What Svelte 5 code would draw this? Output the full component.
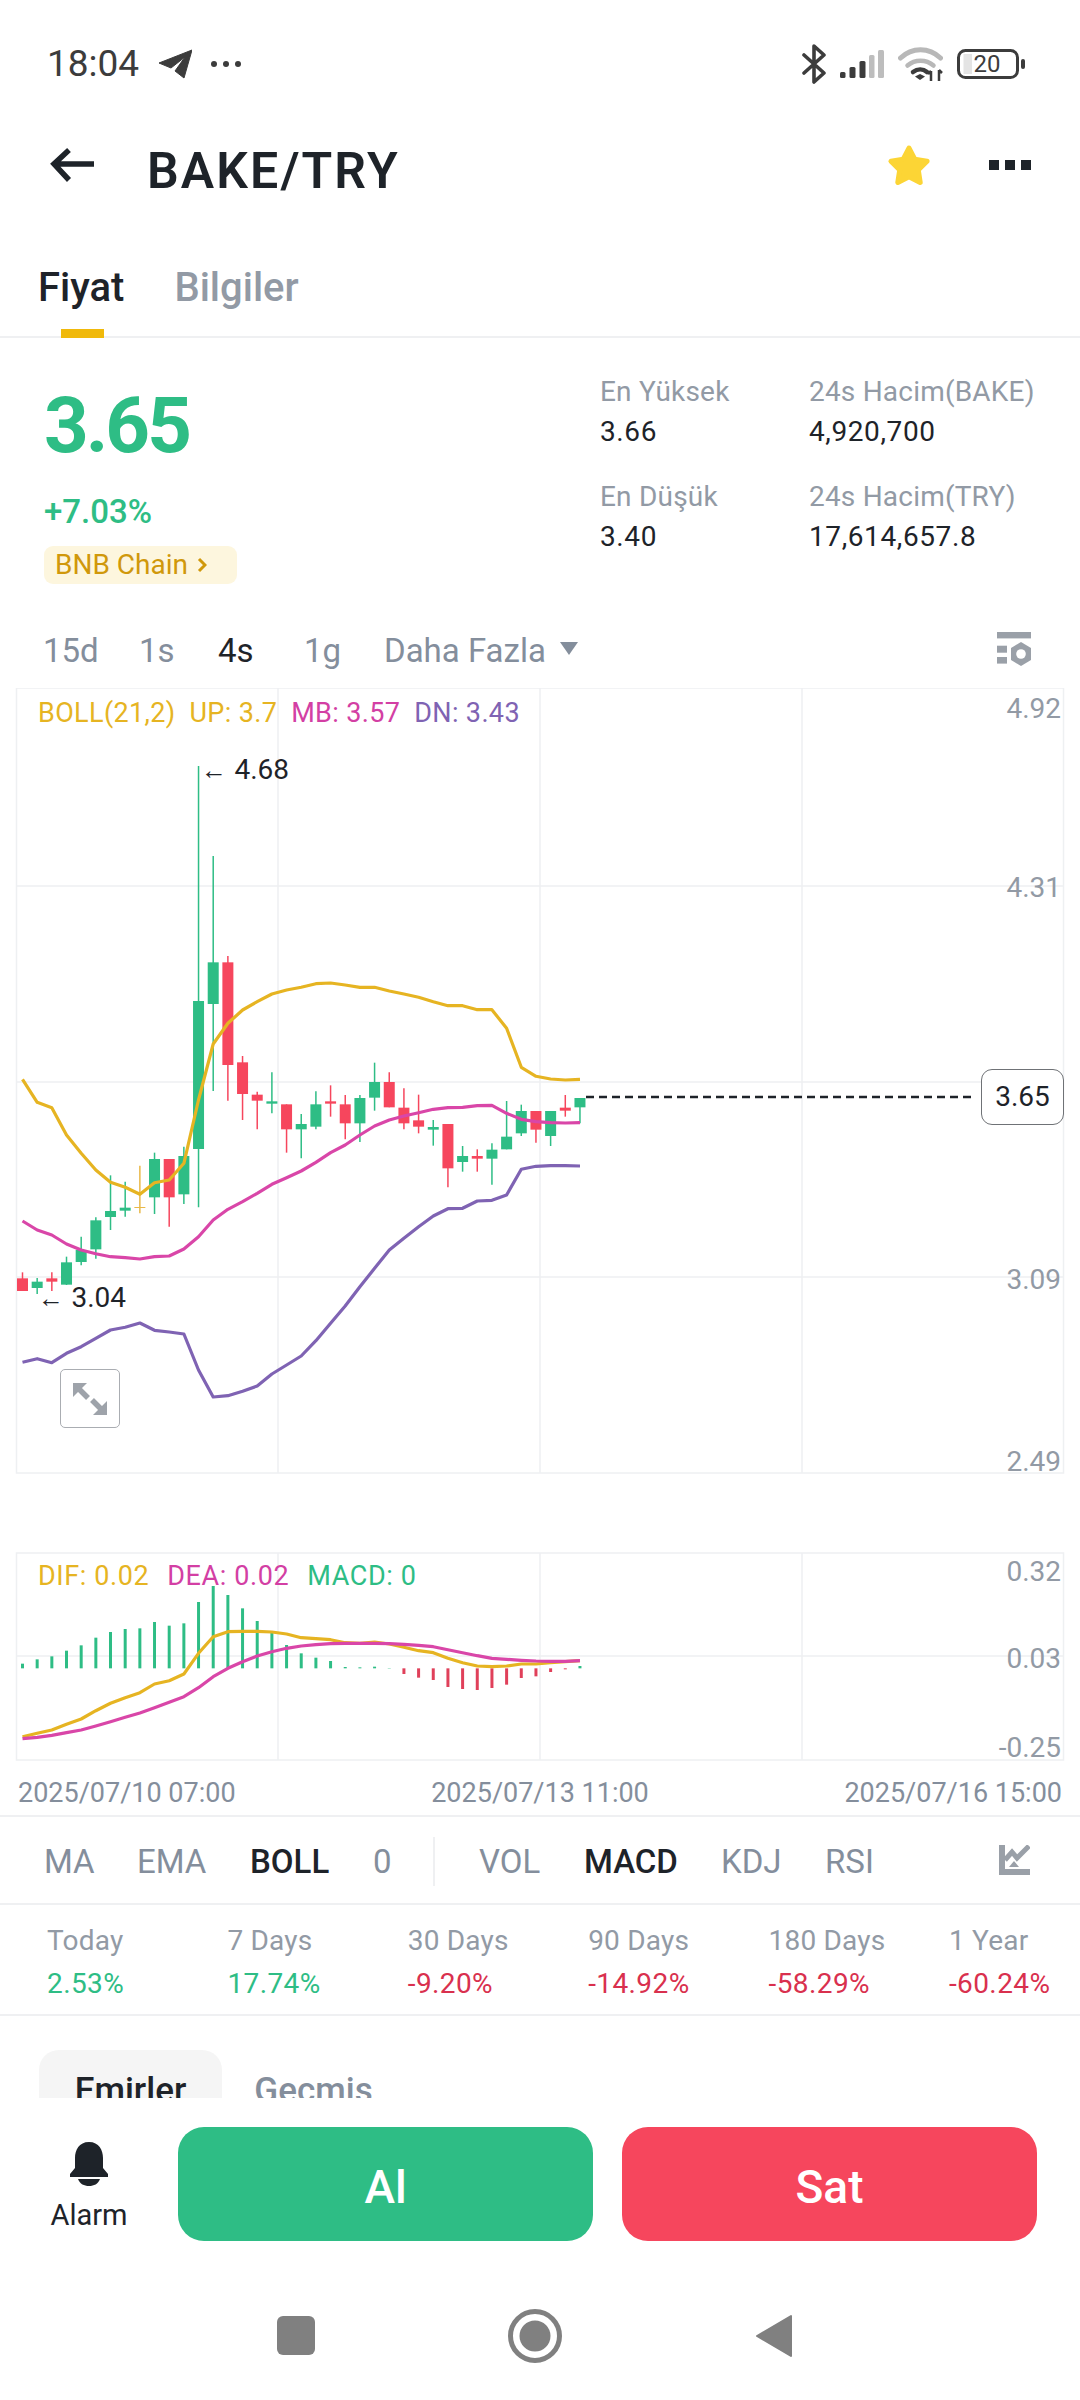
<script>
  const GREEN = '#2ebd85';
  const RED = '#f6465d';

  // chart geometry, candle index -> x, and vertical values scaled by 3 from y=1030
  const cx = (i) => 22.5 + i * 14.67;
  const py = (v) => 1030 + v / 3;
  // [up, wickTop, wickBottom, bodyTop, bodyBottom]
  const candles = [
    [0, 727, 783, 745, 783], [1, 744, 792, 755, 774], [0, 727, 783, 745, 755], [1, 680, 765, 697, 764],
    [1, 620, 706, 660, 696], [1, 562, 686, 571, 658], [1, 436, 600, 543, 561], [1, 455, 560, 533, 542],
    [2, 407, 550, 531, 534], [1, 368, 552, 387, 502], [0, 387, 590, 387, 502], [1, 350, 522, 378, 493],
    [1, -792, 532, -87, 357], [1, -522, 183, -203, -78], [0, -222, 212, -203, 105], [0, 78, 270, 97, 192],
    [0, 185, 298, 194, 212], [1, 127, 250, 214, 221], [0, 223, 368, 223, 298], [1, 252, 385, 282, 298],
    [1, 184, 298, 223, 290], [0, 166, 260, 214, 221], [0, 195, 328, 223, 280], [1, 195, 336, 204, 280],
    [1, 98, 242, 156, 203], [0, 127, 232, 156, 232], [0, 175, 298, 233, 280], [0, 194, 310, 271, 290],
    [1, 270, 347, 291, 299], [0, 282, 472, 282, 415], [1, 348, 425, 378, 396], [0, 358, 425, 378, 386],
    [1, 340, 464, 359, 386], [1, 213, 358, 320, 358], [1, 224, 318, 243, 310], [0, 243, 338, 243, 299],
    [1, 243, 348, 243, 318], [0, 195, 260, 233, 242], [1, 204, 280, 204, 232]
  ];
  const upper = [148, 217, 233, 315, 370, 420, 457, 472, 493, 458, 450, 400, 210, 42, -20, -60, -85, -108, -120, -128, -139, -141, -135, -128, -128, -117, -108, -98, -85, -73, -73, -61, -61, -5, 112, 139, 147, 150, 148];
  const middle = [573, 600, 615, 642, 660, 671, 680, 683, 687, 680, 678, 657, 620, 570, 538, 515, 490, 463, 443, 423, 397, 368, 345, 315, 288, 270, 258, 248, 238, 233, 232, 227, 226, 250, 268, 275, 278, 279, 278];
  const lower = [997, 986, 998, 970, 950, 925, 900, 892, 879, 901, 906, 912, 1020, 1101, 1097, 1084, 1068, 1032, 1005, 978, 932, 880, 828, 770, 715, 660, 625, 590, 558, 536, 535, 513, 511, 495, 418, 409, 407, 407, 408];

  const my = (v) => 1540 + v / 3;
  const bars = [371, 358, 349, 332, 316, 293, 276, 267, 265, 246, 257, 250, 186, 138, 165, 205, 243, 275, 315, 340, 353, 363, 381, 382, 380, 384, 402, 413, 420, 441, 447, 450, 444, 434, 414, 409, 396, 388, 378];
  const dif = [590, 580, 570, 553, 537, 512, 490, 473, 458, 432, 422, 402, 340, 290, 275, 274, 274, 276, 282, 293, 296, 299, 308, 310, 306, 312, 322, 332, 338, 355, 368, 378, 380, 378, 372, 372, 368, 365, 362];
  const dea = [596, 592, 586, 578, 570, 558, 545, 532, 519, 503, 487, 470, 443, 410, 385, 365, 348, 335, 325, 318, 314, 311, 310, 310, 310, 311, 313, 316, 320, 329, 338, 347, 355, 358, 361, 363, 364, 364, 362];

  const line = (vals, f) => vals.map((v, i) => `${cx(i).toFixed(1)},${f(v).toFixed(1)}`).join(' ');

  const intervals = [
    { label: '15d' }, { label: '1s' }, { label: '4s', active: true }, { label: '1g' }
  ];
  const periods = [
    { label: 'Today', value: '2.53%', up: true },
    { label: '7 Days', value: '17.74%', up: true },
    { label: '30 Days', value: '-9.20%' },
    { label: '90 Days', value: '-14.92%' },
    { label: '180 Days', value: '-58.29%' },
    { label: '1 Year', value: '-60.24%' }
  ];
</script>

<div class="screen">
  <div class="content">
    <div class="status">
      <div class="status-left">
        <span class="time">18:04</span>
        <svg width="34" height="30" viewBox="0 0 34 30"><path d="M34 1 1 14l12 5L27 8 17 22l9 7z" fill="#3c3c3c" stroke="#3c3c3c" stroke-width="1" stroke-linejoin="round" /></svg>
        <svg class="more" width="30" height="6" viewBox="0 0 30 6"><circle cx="3" cy="3" r="3" /><circle cx="15" cy="3" r="3" /><circle cx="27" cy="3" r="3" /></svg>
      </div>
      <div class="status-right">
        <svg width="24" height="40" viewBox="0 0 24 40"><path d="M2 11l20 18-10 9V2l10 9L2 29" fill="none" stroke="#3c3c3c" stroke-width="3.6" stroke-linejoin="round" stroke-linecap="round" /></svg>
        <svg width="44" height="28" viewBox="0 0 44 28">
          <rect x="0" y="22" width="5.5" height="6" rx="1.5" fill="#3c3c3c" />
          <rect x="9.5" y="17" width="6" height="11" rx="1.5" fill="#3c3c3c" />
          <rect x="19.5" y="11" width="6" height="17" rx="1.5" fill="#3c3c3c" />
          <rect x="29" y="5" width="5.5" height="23" rx="1.5" fill="#bdbdbd" />
          <rect x="38" y="0" width="6" height="28" rx="1.5" fill="#bdbdbd" />
        </svg>
        <svg width="45" height="36" viewBox="0 0 45 36">
          <path d="M2.5 12C14 1 31 1 42.5 12" fill="none" stroke="#b8b8b8" stroke-width="5" stroke-linecap="round" />
          <path d="M9.5 19.5C17 13 28 13 35.5 19.5" fill="none" stroke="#b8b8b8" stroke-width="4.5" stroke-linecap="round" />
          <path d="M15 26c4.500-3.500 10-3.500 14 0" fill="none" stroke="#3c3c3c" stroke-width="4.500" stroke-linecap="round" />
          <path d="M22 34l-5-3.500 5-2.500 5 2.500z" fill="#3c3c3c" />
          <path d="M33 25v10M30 28l3-3M41 24v11M41 24l3 3" stroke="#3c3c3c" stroke-width="2.500" fill="none" />
        </svg>
        <svg width="68" height="30" viewBox="0 0 68 30">
          <rect x="1.500" y="1.500" width="59" height="27" rx="7" fill="#fff" stroke="#3c3c3c" stroke-width="3" />
          <rect x="6.500" y="5" width="8.500" height="20" fill="#e4e4e4" />
          <rect x="64" y="10" width="4" height="10" rx="2" fill="#3c3c3c" />
          <text x="30" y="23" text-anchor="middle" class="batt">20</text>
        </svg>
      </div>
    </div>

    <div class="header">
      <svg width="45" height="36" viewBox="0 0 45 36"><path d="M44 17H5M19 3 4 17l15 16" fill="none" stroke="#1e2329" stroke-width="5.500" /></svg>
      <h1>BAKE/TRY</h1>
      <svg class="star" width="44" height="44" viewBox="0 0 43 43"><polygon points="21.500,5 27.100,15.800 39.100,17.800 30.500,26.400 32.400,38.500 21.500,33 10.600,38.500 12.500,26.400 3.900,17.800 15.900,15.800" fill="#fcd535" stroke="#fcd535" stroke-width="5" stroke-linejoin="round" /></svg>
      <div class="dots"><i></i><i></i><i></i></div>
    </div>

    <div class="tabs">
      <div class="tab active">Fiyat<span class="ink"></span></div>
      <div class="tab">Bilgiler</div>
    </div>

    <div class="summary">
      <div class="price-col">
        <div class="price">3.65</div>
        <div class="change">+7.03%</div>
        <div class="badge">BNB Chain
          <svg width="10" height="16" viewBox="0 0 10 16"><path d="M2 2l6 6-6 6" fill="none" stroke="#d0980b" stroke-width="3" /></svg>
        </div>
      </div>
      <div class="stats">
        <div><span class="k">En Yüksek</span><span class="v">3.66</span></div>
        <div><span class="k">24s Hacim(BAKE)</span><span class="v">4,920,700</span></div>
        <div><span class="k">En Düşük</span><span class="v">3.40</span></div>
        <div><span class="k">24s Hacim(TRY)</span><span class="v">17,614,657.8</span></div>
      </div>
    </div>

    <div class="intervals">
      {#each intervals as it}
        <span class:on={it.active}>{it.label}</span>
      {/each}
      <span class="more-int">Daha Fazla
        <svg width="20" height="14" viewBox="0 0 20 14"><path d="M1 1h18l-9 13z" fill="#848e9c" /></svg>
      </span>
      <svg class="settings" width="34" height="34" viewBox="0 0 34 34">
        <rect width="34" height="6.400" />
        <rect y="13.700" width="10" height="7" />
        <rect y="25" width="10" height="6.600" />
        <path d="M24 10l10 6v12l-10 6-10-6V16z" />
        <circle cx="24" cy="22" r="4.800" fill="#fff" />
      </svg>
    </div>

    <div class="chart">
      <svg class="plot" width="1080" height="1127" viewBox="0 688 1080 1127">
        <g stroke="#eef0f2" stroke-width="1.500" fill="none">
          <rect x="16.500" y="688" width="1047" height="785" />
          <path d="M16.500 886H1063M16.500 1082H1063M16.500 1277H1063M278 688V1473M540 688V1473M802 688V1473" />
          <rect x="16.500" y="1553" width="1047" height="207" />
          <path d="M16.500 1656H1063M278 1553V1760M540 1553V1760M802 1553V1760" />
        </g>

        {#each candles as c, i}
          {@const col = c[0] === 1 ? GREEN : c[0] === 0 ? RED : '#e9b949'}
          <line x1={cx(i)} x2={cx(i)} y1={py(c[1])} y2={py(c[2])} stroke={col} stroke-width="1.500" />
          <rect x={cx(i) - 5.500} y={py(c[3])} width="11" height={py(c[4]) - py(c[3])} fill={col} />
        {/each}
        <polyline points={line(upper, py)} class="ln" stroke="#e6b422" />
        <polyline points={line(middle, py)} class="ln" stroke="#d946a8" />
        <polyline points={line(lower, py)} class="ln" stroke="#7f63b3" />
        <path d="M586 1097H976" stroke="#1e2329" stroke-width="2.500" stroke-dasharray="8 5" />

        {#each bars as b, i}
          <line x1={cx(i)} x2={cx(i)} y1={my(b)} y2={my(385)} stroke={i > 25 && i < 38 ? '#e0405a' : GREEN} stroke-width="3" />
        {/each}
        <polyline points={line(dif, my)} class="ln" stroke="#e6b422" />
        <polyline points={line(dea, my)} class="ln" stroke="#d946a8" />
      </svg>

      <div class="legend boll">
        <span class="gold">BOLL(21,2)</span><span class="gold">UP: 3.7</span><span class="pink">MB: 3.57</span><span class="violet">DN: 3.43</span>
      </div>
      <div class="legend macd">
        <span class="gold">DIF: 0.02</span><span class="pink">DEA: 0.02</span><span class="teal">MACD: 0</span>
      </div>

      <div class="mark high">← <b>4.68</b></div>
      <div class="mark low">← <b>3.04</b></div>

      <div class="axis" style="top: 3px">4.92</div>
      <div class="axis" style="top: 182px">4.31</div>
      <div class="axis" style="top: 574px">3.09</div>
      <div class="axis" style="top: 756px">2.49</div>
      <div class="axis" style="top: 866px">0.32</div>
      <div class="axis" style="top: 953px">0.03</div>
      <div class="axis" style="top: 1042px">-0.25</div>
      <div class="last">3.65</div>

      <button class="expand" aria-label="expand">
        <svg width="34" height="32" viewBox="0 0 34 32" fill="#9ea3aa">
          <path d="M0 0h14L0 14z" />
          <path d="M5 5l10 10" stroke="#9ea3aa" stroke-width="5.500" />
          <path d="M34 32H20l14-14z" />
          <path d="M29 27 19 17" stroke="#9ea3aa" stroke-width="5.500" />
        </svg>
      </button>

      <div class="dates"><span>2025/07/10 07:00</span><span>2025/07/13 11:00</span><span>2025/07/16 15:00</span></div>
    </div>

    <div class="indicators">
      <span>MA</span><span>EMA</span><span class="on">BOLL</span><span>0</span>
      <i class="sep"></i>
      <span>VOL</span><span class="on">MACD</span><span>KDJ</span><span>RSI</span>
      <svg width="31" height="31" viewBox="0 0 31 31" fill="#9aa0a8">
        <path d="M0 0h6v24h25v6H0z" />
        <path d="M6 15l7-8 5 6L30 1" fill="none" stroke="#9aa0a8" stroke-width="5" />
        <path d="M10 22l5-6 5 6z" />
      </svg>
    </div>

    <div class="periods">
      {#each periods as p}
        <div>
          <span class="k">{p.label}</span>
          <span class="val" class:up={p.up}>{p.value}</span>
        </div>
      {/each}
    </div>

    <div class="orders">
      <div class="otab active">Emirler</div>
      <div class="otab">Geçmiş</div>
    </div>
  </div>

  <div class="actions">
    <div class="alarm">
      <svg width="40" height="44" viewBox="0 0 40 44" fill="#1e2329">
        <path d="M20 0C10 0 6 8 6 16v10l-5 6v3h38v-3l-5-6V16C34 8 30 0 20 0z" />
        <path d="M9 37h22c-2 5-6 7-11 7s-9-2-11-7z" />
      </svg>
      <span>Alarm</span>
    </div>
    <button class="trade buy">Al</button>
    <button class="trade sell">Sat</button>
  </div>

  <div class="nav">
    <span class="square"></span>
    <svg width="54" height="54" viewBox="0 0 54 54"><circle cx="27" cy="27" r="24.500" fill="none" stroke="#808080" stroke-width="5" /><circle cx="27" cy="27" r="15.500" fill="#808080" /></svg>
    <svg width="38" height="44" viewBox="0 0 38 44"><path d="M36 2v40L2 22z" fill="#808080" stroke="#808080" stroke-width="2" stroke-linejoin="round" /></svg>
  </div>
</div>

<style>
  :global(body) {
    margin: 0;
    background: #fff;
  }

  .screen {
    width: 1080px;
    height: 2400px;
    display: flex;
    flex-direction: column;
    font-family: Roboto, "Liberation Sans", sans-serif;
    color: #1e2329;
    background: #fff;
    overflow: hidden;
  }

  .content {
    height: 2098px;
    overflow: hidden;
    flex-shrink: 0;
  }

  .status {
    height: 110px;
    padding: 18px 55px 0 47px;
    box-sizing: border-box;
    display: flex;
    justify-content: space-between;
    align-items: center;
  }

  .status-left {
    display: flex;
    align-items: center;
    gap: 19px;
    color: #3c3c3c;
  }

  .time {
    font-size: 37px;
    line-height: 44px;
  }

  .more {
    fill: #3c3c3c;
  }

  .status-right {
    display: flex;
    align-items: center;
    gap: 14px;
  }

  .batt {
    font-size: 24px;
    fill: #3c3c3c;
    font-family: Roboto, sans-serif;
  }

  .header {
    height: 110px;
    padding: 0 49px 0 50px;
    display: flex;
    align-items: center;
  }

  h1 {
    margin: 12px 0 0 52px;
    font-size: 50px;
    line-height: 60px;
    font-weight: 600;
    letter-spacing: 2.1px;
    flex: 1;
  }

  .star {
    margin-right: 58px;
  }

  .dots {
    display: flex;
    gap: 6px;
  }

  .dots i {
    width: 10px;
    height: 10px;
    background: #1e2329;
  }

  .tabs {
    height: 118px;
    box-sizing: border-box;
    border-bottom: 2px solid #eff0f2;
    display: flex;
    gap: 50px;
    padding: 43px 0 0 38px;
  }

  .tab {
    position: relative;
    font-size: 40px;
    line-height: 50px;
    color: #929aa5;
    font-weight: 500;
  }

  .tab.active {
    color: #1e2329;
  }

  .ink {
    position: absolute;
    left: 23px;
    top: 66px;
    width: 43px;
    height: 9px;
    background: #f0b90b;
  }

  .summary {
    height: 272px;
    display: flex;
  }

  .price-col {
    width: 600px;
    padding: 48px 0 0 44px;
    box-sizing: border-box;
  }

  .price {
    font-size: 78px;
    line-height: 80px;
    font-weight: 700;
    letter-spacing: -3px;
    color: #2ebd85;
  }

  .change {
    margin-top: 26px;
    font-size: 33px;
    line-height: 40px;
    font-weight: 500;
    color: #2ebd85;
  }

  .badge {
    margin-top: 14px;
    width: 193px;
    height: 38px;
    box-sizing: border-box;
    padding-left: 11px;
    border-radius: 9px;
    background: #fdf6de;
    color: #d0980b;
    font-size: 28px;
    line-height: 38px;
    display: flex;
    align-items: center;
    gap: 9px;
  }

  .stats {
    display: grid;
    grid-template-columns: 209px auto;
    grid-auto-rows: 105px;
    padding-top: 34px;
  }

  .stats > div {
    display: flex;
    flex-direction: column;
  }

  .k {
    font-size: 28px;
    line-height: 40px;
    letter-spacing: 0.2px;
    color: #929aa5;
  }

  .v {
    font-size: 28px;
    line-height: 40px;
    letter-spacing: 0.6px;
  }

  .intervals {
    height: 78px;
    padding: 2px 49px 0 43px;
    box-sizing: border-box;
    display: grid;
    grid-template-columns: 96px 79px 86px 80px 1fr auto;
    align-items: center;
    font-size: 33px;
    color: #848e9c;
  }

  .intervals .on {
    color: #1e2329;
  }

  .more-int {
    display: flex;
    align-items: center;
    gap: 13px;
  }

  .more-int svg {
    margin-top: -5px;
  }

  .settings {
    fill: #9aa0a8;
    margin-top: -3px;
  }

  .chart {
    position: relative;
    height: 1127px;
    border-bottom: 2px solid #eff0f2;
  }

  .plot {
    display: block;
  }

  .ln {
    fill: none;
    stroke-width: 3.2;
    stroke-linejoin: round;
  }

  .legend {
    position: absolute;
    left: 38px;
    display: flex;
    font-size: 27px;
    line-height: 36px;
  }

  .boll {
    top: 7px;
    gap: 14px;
    letter-spacing: 0.35px;
  }

  .macd {
    top: 870px;
    gap: 18px;
    letter-spacing: 0.6px;
  }

  .gold {
    color: #e6b422;
  }

  .pink {
    color: #d33fa4;
  }

  .violet {
    color: #7f63b3;
  }

  .teal {
    color: #2ebd85;
  }

  .mark {
    position: absolute;
    font-size: 26px;
    line-height: 36px;
  }

  .mark b {
    font-size: 28px;
    font-weight: 400;
    margin-left: 1px;
  }

  .high {
    left: 201px;
    top: 64px;
  }

  .low {
    left: 38px;
    top: 592px;
  }

  .axis {
    position: absolute;
    right: 19px;
    font-size: 28px;
    line-height: 36px;
    color: #929aa5;
  }

  .last {
    position: absolute;
    left: 981px;
    top: 381px;
    width: 83px;
    height: 56px;
    box-sizing: border-box;
    border: 1.5px solid #6f7276;
    border-radius: 11px;
    background: #fff;
    font-size: 28px;
    line-height: 54px;
    text-align: center;
  }

  .expand {
    position: absolute;
    left: 60px;
    top: 681px;
    width: 60px;
    height: 59px;
    padding: 0;
    border: 1.5px solid #aaadb2;
    border-radius: 5px;
    background: #fff;
    display: flex;
    align-items: center;
    justify-content: center;
  }

  .dates {
    position: absolute;
    left: 18px;
    right: 18px;
    top: 1087px;
    display: flex;
    justify-content: space-between;
    font-size: 27px;
    line-height: 36px;
    color: #848e9c;
  }

  .indicators {
    height: 88px;
    padding: 2px 50px 0 44px;
    box-sizing: border-box;
    border-bottom: 2px solid #eff0f2;
    display: grid;
    grid-template-columns: 93px 113px 123px 60px 46px 105px 137px 104px 1fr auto;
    align-items: center;
    font-size: 33px;
    color: #848e9c;
  }

  .indicators .on {
    color: #1e2329;
    font-weight: 500;
  }

  .sep {
    width: 1.5px;
    height: 49px;
    background: #eff0f2;
  }

  .indicators svg {
    margin-top: -2px;
  }

  .periods {
    height: 111px;
    box-sizing: border-box;
    border-bottom: 2px solid #eff0f2;
    padding: 16px 0 0 47px;
    display: grid;
    grid-template-columns: repeat(6, 180.4px);
  }

  .periods > div {
    display: flex;
    flex-direction: column;
    gap: 3px;
  }

  .val {
    font-size: 28px;
    line-height: 40px;
    letter-spacing: 0.4px;
    color: #d9304e;
  }

  .val.up {
    color: #2ebd85;
  }

  .orders {
    display: flex;
    padding: 34px 0 0 39px;
  }

  .otab {
    width: 183px;
    height: 100px;
    box-sizing: border-box;
    padding-top: 18px;
    text-align: center;
    border-radius: 20px 20px 0 0;
    font-size: 35px;
    line-height: 46px;
    color: #848e9c;
    font-weight: 500;
  }

  .otab.active {
    background: #f5f5f5;
    color: #1e2329;
  }

  .actions {
    height: 143px;
    padding: 29px 43px 0 0;
    box-sizing: border-box;
    display: flex;
    align-items: flex-start;
    flex-shrink: 0;
  }

  .alarm {
    width: 178px;
    display: flex;
    flex-direction: column;
    align-items: center;
    font-size: 29px;
    line-height: 36px;
    padding-top: 15px;
  }

  .alarm span {
    margin-top: 11px;
  }

  .trade {
    width: 415px;
    height: 114px;
    padding: 6px 0 0;
    border: 0;
    border-radius: 26px;
    color: #fff;
    font-family: inherit;
    font-size: 46px;
    font-weight: 500;
  }

  .buy {
    background: #2ebd85;
    margin-right: 29px;
  }

  .sell {
    background: #f6465d;
  }

  .nav {
    flex: 1;
    display: grid;
    grid-template-columns: 277px 38px 193px 54px 193px 38px;
    align-items: center;
    padding-top: 30px;
  }

  .nav .square {
    grid-column: 2;
    width: 38px;
    height: 39px;
    border-radius: 6px;
    background: #808080;
  }

  .nav svg:nth-of-type(1) {
    grid-column: 4;
  }

  .nav svg:nth-of-type(2) {
    grid-column: 6;
  }
</style>
